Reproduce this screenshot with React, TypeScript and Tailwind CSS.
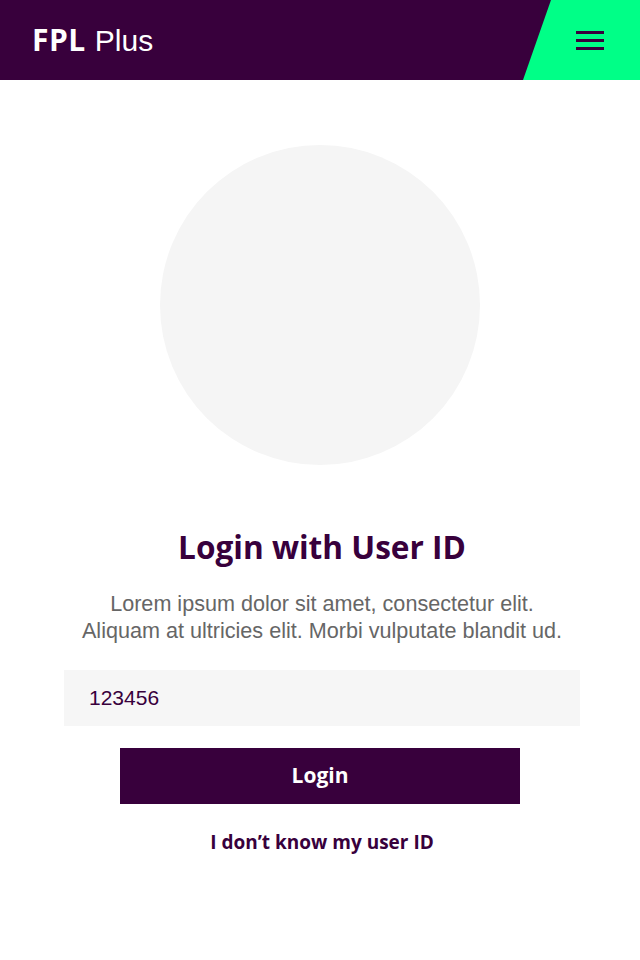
import React, { useState } from 'react';

const Header: React.FC = () => {
    return (
        <header className="relative flex h-20 items-center bg-[#38003c] px-8">
            <div className="flex items-baseline gap-[9px] text-[30px] leading-none text-white">
                <span className="font-['Open_Sans',sans-serif] font-bold tracking-[0.5px]">FPL</span>
                <span className="font-['Liberation_Sans',sans-serif] font-light">Plus</span>
            </div>

            {/* Green menu tab */}
            <div className="absolute inset-y-0 right-0 flex w-[117px] items-center justify-end bg-[#00ff87] pr-9 [clip-path:polygon(28px_0,100%_0,100%_100%,0_100%)]">
                <div className="flex w-7 flex-col gap-[5px]">
                    <span className="h-[3px] bg-[#38003c]" />
                    <span className="h-[3px] bg-[#38003c]" />
                    <span className="h-[3px] bg-[#38003c]" />
                </div>
            </div>
        </header>
    );
};

export default function App() {
    const [userId, setUserId] = useState('123456');

    return (
        <div className="min-h-[960px] bg-white">
            <Header />

            <main className="flex flex-col items-center">
                {/* Avatar placeholder */}
                <div className="mt-[65px] h-80 w-80 rounded-full bg-[#f5f5f5]" />

                <h1 className="ml-1 mt-[62px] font-['Open_Sans',sans-serif] text-[31.6px] font-bold leading-10 text-[#38003c]">
                    Login with User ID
                </h1>

                <p className="ml-1 mt-[23px] text-center font-['Liberation_Sans',sans-serif] text-[21.6px] leading-[27px] text-[#666666]">
                    Lorem ipsum dolor sit amet, consectetur elit.
                    <br />
                    Aliquam at ultricies elit. Morbi vulputate blandit ud.
                </p>

                <input
                    value={userId}
                    onChange={(e) => setUserId(e.target.value)}
                    className="ml-1 mt-[26px] h-14 w-[516px] bg-[#f6f6f6] px-[25px] font-['Liberation_Sans',sans-serif] text-[21px] text-[#38003c] outline-none"
                />

                <button className="mt-[22px] h-14 w-[400px] bg-[#38003c] font-['Open_Sans',sans-serif] text-[21px] font-bold text-white">
                    Login
                </button>

                <a className="ml-1 mt-[24px] font-['Open_Sans',sans-serif] text-[19px] font-bold text-[#38003c]">
                    I don’t know my user ID
                </a>
            </main>
        </div>
    );
}
